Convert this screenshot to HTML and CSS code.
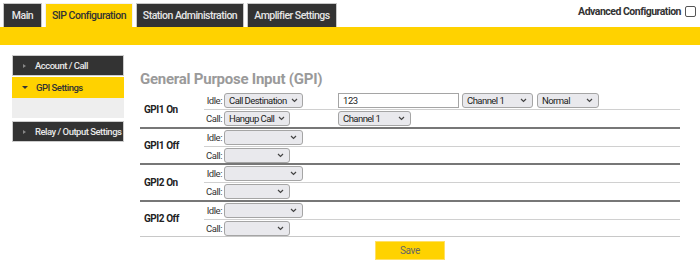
FILE: index.html
```html
<!DOCTYPE html>
<html>
<head>
<meta charset="utf-8">
<link rel="stylesheet" href="styles.css">
</head>
<body>
<header class="top">
  <nav class="tabs">
    <a class="tab">Main</a>
    <a class="tab active">SIP Configuration</a>
    <a class="tab">Station Administration</a>
    <a class="tab">Amplifier Settings</a>
  </nav>
  <label class="adv">Advanced Configuration <span class="cb"></span></label>
</header>
<div class="bar"></div>
<div class="main">
  <aside class="side">
    <div class="item"><span class="tri right"></span>Account / Call</div>
    <div class="item active"><span class="tri down"></span>GPI Settings</div>
    <div class="sub"></div>
    <div class="item"><span class="tri right"></span>Relay / Output Settings</div>
  </aside>
  <section class="content">
    <h2 class="title">General Purpose Input (GPI)</h2>
    <div class="gpi">
      <div class="group">
        <div class="gname">GPI1 On</div>
        <div class="rows">
          <div class="row idle">
            <span class="lbl">Idle:</span>
            <span class="cell"><span class="sel w-idle">Call Destination<svg class="chev" width="7" height="5" viewBox="0 0 7 5"><path d="M1 1l2.5 2.5L6 1"/></svg></span></span>
            <span class="inp">123</span>
            <span class="sel w-ch">Channel 1<svg class="chev" width="7" height="5" viewBox="0 0 7 5"><path d="M1 1l2.5 2.5L6 1"/></svg></span>
            <span class="sel w-norm">Normal<svg class="chev" width="7" height="5" viewBox="0 0 7 5"><path d="M1 1l2.5 2.5L6 1"/></svg></span>
          </div>
          <div class="row call">
            <span class="lbl">Call:</span>
            <span class="cell"><span class="sel w-call">Hangup Call<svg class="chev" width="7" height="5" viewBox="0 0 7 5"><path d="M1 1l2.5 2.5L6 1"/></svg></span></span>
            <span class="sel w-ch2">Channel 1<svg class="chev" width="7" height="5" viewBox="0 0 7 5"><path d="M1 1l2.5 2.5L6 1"/></svg></span>
          </div>
        </div>
      </div>
      <div class="group">
        <div class="gname">GPI1 Off</div>
        <div class="rows">
          <div class="row idle">
            <span class="lbl">Idle:</span>
            <span class="cell"><span class="sel w-idle"><svg class="chev" width="7" height="5" viewBox="0 0 7 5"><path d="M1 1l2.5 2.5L6 1"/></svg></span></span>
          </div>
          <div class="row call">
            <span class="lbl">Call:</span>
            <span class="cell"><span class="sel w-call"><svg class="chev" width="7" height="5" viewBox="0 0 7 5"><path d="M1 1l2.5 2.5L6 1"/></svg></span></span>
          </div>
        </div>
      </div>
      <div class="group">
        <div class="gname">GPI2 On</div>
        <div class="rows">
          <div class="row idle">
            <span class="lbl">Idle:</span>
            <span class="cell"><span class="sel w-idle"><svg class="chev" width="7" height="5" viewBox="0 0 7 5"><path d="M1 1l2.5 2.5L6 1"/></svg></span></span>
          </div>
          <div class="row call">
            <span class="lbl">Call:</span>
            <span class="cell"><span class="sel w-call"><svg class="chev" width="7" height="5" viewBox="0 0 7 5"><path d="M1 1l2.5 2.5L6 1"/></svg></span></span>
          </div>
        </div>
      </div>
      <div class="group last">
        <div class="gname">GPI2 Off</div>
        <div class="rows">
          <div class="row idle">
            <span class="lbl">Idle:</span>
            <span class="cell"><span class="sel w-idle"><svg class="chev" width="7" height="5" viewBox="0 0 7 5"><path d="M1 1l2.5 2.5L6 1"/></svg></span></span>
          </div>
          <div class="row call">
            <span class="lbl">Call:</span>
            <span class="cell"><span class="sel w-call"><svg class="chev" width="7" height="5" viewBox="0 0 7 5"><path d="M1 1l2.5 2.5L6 1"/></svg></span></span>
          </div>
        </div>
      </div>
    </div>
    <div class="actions"><button class="save">Save</button></div>
  </section>
</div>
</body>
</html>
```
FILE: styles.css
```css
* { box-sizing: border-box; }
body {
  margin: 0;
  background: #fff;
  font-family: Roboto, "Liberation Sans", sans-serif;
  color: #333;
  font-size: 10px;
  letter-spacing: -0.45px;
  white-space: nowrap;
}
.top {
  display: flex;
  justify-content: space-between;
  align-items: flex-start;
  height: 27px;
  padding: 3px 4px 0 3px;
}
.tabs { display: flex; gap: 3px; height: 24px; }
.tab {
  display: flex;
  align-items: center;
  justify-content: center;
  height: 24px;
  background: #333;
  color: #e6e6e6;
  border: 1px solid #c8c8c8;
  border-bottom: none;
  font-size: 10.5px;
  font-weight: 500;
  letter-spacing: -0.5px;
}
.tab:nth-child(1) { width: 39px; }
.tab:nth-child(2) { width: 88px; }
.tab:nth-child(3) { width: 108px; }
.tab:nth-child(4) { width: 90px; }
.tab.active { background: #ffd200; color: #333; border-color: #f2f2f2; }
.adv {
  display: flex;
  align-items: center;
  gap: 4px;
  font-size: 10.5px;
  font-weight: 700;
  letter-spacing: -0.5px;
  color: #333;
  margin-top: 2px;
}
.cb {
  width: 11px; height: 11px;
  border: 1px solid #555;
  border-radius: 2px;
  background: #fff;
}
.bar { height: 18px; background: #ffd200; }
.main { display: flex; padding: 10px 20px 0 12px; gap: 16px; }
.side { width: 112px; display: flex; flex-direction: column; }
.item {
  height: 21px;
  display: flex;
  align-items: center;
  padding-left: 8px;
  background: #333;
  color: #e8e8e8;
  border: 1px solid #ccc;
  font-size: 9.5px;
  font-weight: 500;
  letter-spacing: -0.5px;
}
.item.active { background: #ffd200; color: #333; border-color: #ffd200; margin-top: 1px; }
.sub { height: 20px; background: #eeeeee; margin-bottom: 3px; }
.tri { width: 0; height: 0; flex: none; }
.tri.right { border-left: 3px solid #888; border-top: 2.5px solid transparent; border-bottom: 2.5px solid transparent; margin-left: 2px; margin-right: 9px; }
.tri.down { border-top: 3px solid #333; border-left: 3px solid transparent; border-right: 3px solid transparent; margin-left: 1px; margin-right: 8px; }
.content { flex: 1; }
.title {
  margin: 0;
  height: 37px;
  padding-top: 14px;
  font-size: 15px;
  line-height: 20px;
  font-weight: 700;
  letter-spacing: -0.25px;
  color: #9a9a9a;
}
.gpi { display: flex; flex-direction: column; }
.group { display: flex; border-bottom: 2px solid #777; }
.group.last { border-bottom: 1px solid #c8c8c8; }
.gname {
  width: 64px;
  padding-left: 4px;
  display: flex;
  align-items: center;
  font-weight: 700;
  font-size: 10px;
  color: #222;
}
.rows { flex: 1; display: flex; flex-direction: column; }
.row { display: flex; align-items: center; }
.row.idle { height: 18px; border-bottom: 1px solid #d0d0d0; }
.row.call { height: 15.5px; margin-top: 1px; }
.lbl { width: 20px; text-align: right; padding-right: 2px; font-size: 9.5px; color: #333; }
.cell { width: 114px; display: flex; }
.sel {
  height: 15px;
  display: flex;
  align-items: center;
  gap: 4px;
  padding: 0 5px 0 4px;
  background: #e9e9ed;
  border: 1px solid #a5a5a5;
  border-radius: 3px;
  font-size: 9.5px;
  letter-spacing: -0.55px;
  color: #222;
}
.chev { flex: none; margin-left: auto; }
.chev path { fill: none; stroke: #444; stroke-width: 1.2; }
.w-idle { width: 79px; }
.w-call { width: 66px; }
.w-ch { width: 71px; margin-left: 3px; }
.w-norm { width: 62px; margin-left: 4px; }
.w-ch2 { width: 73px; }
.inp {
  width: 121px;
  height: 15px;
  display: flex;
  align-items: center;
  padding-left: 4px;
  border: 1px solid #a5a5a5;
  background: #fff;
  font-size: 9.5px;
  color: #222;
}
.actions { display: flex; justify-content: center; padding-top: 4px; }
.save {
  width: 70px;
  height: 19px;
  background: #ffd200;
  border: 1px solid #ffe066;
  color: #666;
  font-family: inherit;
  font-size: 10px;
  letter-spacing: -0.3px;
  padding: 0;
}
```
